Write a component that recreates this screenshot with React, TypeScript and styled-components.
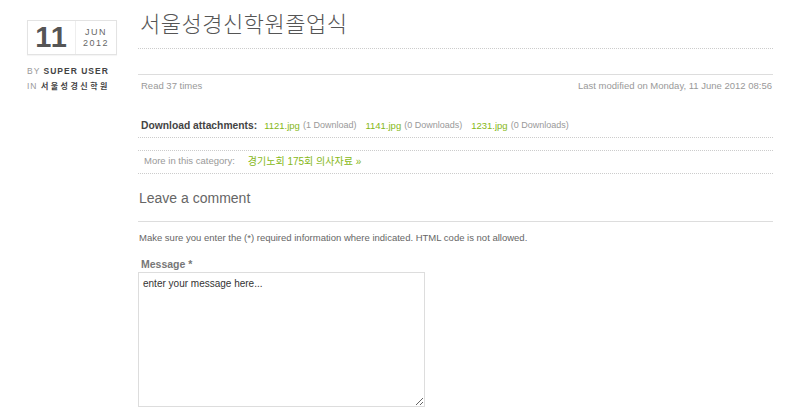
import React from 'react';
import styled, { createGlobalStyle } from 'styled-components';

const GlobalStyle = createGlobalStyle`
  html, body {
    margin: 0;
    padding: 0;
    background: #fff;
  }
  body {
    font-family: "Liberation Sans", Arial, sans-serif;
    color: #666;
  }
`;

const Page = styled.div`
  display: flex;
  align-items: flex-start;
  width: 800px;
  height: 417px;
  overflow: hidden;
`;

const Sidebar = styled.aside`
  width: 90px;
  margin: 20px 0 0 27px;
  flex-shrink: 0;
`;

const DateBox = styled.div`
  display: flex;
  align-items: center;
  height: 35px;
  border: 1px solid #e3e3e3;
  box-shadow: 0 1px 1px rgba(0, 0, 0, 0.04);
  box-sizing: border-box;
`;

const Day = styled.div`
  width: 47px;
  text-align: center;
  font-size: 29px;
  font-weight: bold;
  color: #555;
  line-height: 1;
  letter-spacing: 1px;
  border-right: 1px solid #eee;
  padding: 2px 0;
`;

const MonthYear = styled.div`
  flex: 1;
  text-align: center;
  font-size: 9px;
  letter-spacing: 1.5px;
  line-height: 11px;
  color: #666;
`;

const Meta = styled.div<{ $top: number }>`
  margin-top: ${p => p.$top}px;
  font-size: 8.5px;
  letter-spacing: 1px;
  color: #999;
  line-height: 10px;
  white-space: nowrap;

  strong {
    color: #444;
    font-weight: bold;
  }
`;

const Category = styled.strong`
  font-family: "Noto Sans CJK KR", sans-serif;
  font-size: 8px;
  letter-spacing: 2.5px;
`;

const Main = styled.main`
  width: 635px;
  margin-left: 21px;
  flex-shrink: 0;
`;

const Title = styled.h1`
  margin: 0;
  padding: 10px 0 13px 2px;
  height: 25px;
  font-family: "Noto Sans CJK KR", sans-serif;
  font-weight: 300;
  font-size: 22px;
  line-height: 25px;
  color: #555;
  letter-spacing: 0.5px;
  border-bottom: 1px dotted #ccc;
`;

const InfoRow = styled.div`
  display: flex;
  justify-content: space-between;
  margin-top: 25px;
  padding: 5px 1px 0 3px;
  border-top: 1px solid #ddd;
  font-size: 9.5px;
  line-height: 11px;
  color: #999;
`;

const Line = styled.div<{ $top: number; $height: number; $indent: number }>`
  display: flex;
  align-items: center;
  margin-top: ${p => p.$top}px;
  height: ${p => p.$height}px;
  padding-left: ${p => p.$indent}px;
  border-bottom: 1px dotted #ccc;
  font-size: 9.5px;
  color: #999;
  white-space: nowrap;
`;

const CategoryLine = styled(Line)`
  border-top: 1px dotted #ccc;
  padding-bottom: 3px;
`;

const Label = styled.span`
  font-size: 10.3px;
  font-weight: bold;
  color: #444;
  margin-right: 7px;
`;

const FileLink = styled.a`
  color: #86b817;
  text-decoration: none;
  font-size: 9.5px;
`;

const Count = styled.span`
  font-size: 9px;
  color: #999;
  margin: 0 9px 0 3px;
`;

const CatLink = styled.a`
  color: #86b817;
  text-decoration: none;
  font-family: "Liberation Sans", "Noto Sans CJK KR", sans-serif;
  font-size: 10px;
  margin-left: 13px;
`;

const CommentHeading = styled.h3`
  margin: 14px 0 0;
  padding: 0 0 13px 1px;
  font-size: 14px;
  font-weight: normal;
  line-height: 20px;
  color: #666;
  border-bottom: 1px solid #ddd;
`;

const Note = styled.p`
  margin: 10px 0 0;
  padding-left: 1px;
  font-size: 9.5px;
  line-height: 11px;
  color: #666;
`;

const FieldLabel = styled.label`
  display: block;
  margin: 15px 0 0 3px;
  font-size: 10.5px;
  font-weight: bold;
  line-height: 12px;
  color: #777;
`;

const TextArea = styled.textarea`
  display: block;
  box-sizing: border-box;
  width: 287px;
  height: 135px;
  margin-top: 2px;
  padding: 5px 4px;
  border: 1px solid #ddd;
  font-family: "Liberation Sans", Arial, sans-serif;
  font-size: 10px;
  color: #333;
  resize: both;
  outline: none;
`;

const files = [
  { name: '1121.jpg', count: '(1 Download)' },
  { name: '1141.jpg', count: '(0 Downloads)' },
  { name: '1231.jpg', count: '(0 Downloads)' },
];

export default function App() {
  return (
    <>
      <GlobalStyle />
      <Page>
        <Sidebar>
          <DateBox>
            <Day>11</Day>
            <MonthYear>
              JUN
              <br />
              2012
            </MonthYear>
          </DateBox>
          <Meta $top={11}>
            BY <strong>SUPER USER</strong>
          </Meta>
          <Meta $top={5}>
            IN <Category>서울성경신학원</Category>
          </Meta>
        </Sidebar>
        <Main>
          <Title>서울성경신학원졸업식</Title>
          <InfoRow>
            <span>Read 37 times</span>
            <span>Last modified on Monday, 11 June 2012 08:56</span>
          </InfoRow>
          <Line $top={22} $height={24} $indent={3}>
            <Label>Download attachments:</Label>
            {files.map(f => (
              <React.Fragment key={f.name}>
                <FileLink href="#">{f.name}</FileLink>
                <Count>{f.count}</Count>
              </React.Fragment>
            ))}
          </Line>
          <CategoryLine $top={12} $height={19} $indent={6}>
            More in this category:
            <CatLink href="#">경기노회 175회 의사자료 »</CatLink>
          </CategoryLine>
          <CommentHeading>Leave a comment</CommentHeading>
          <Note>Make sure you enter the (*) required information where indicated. HTML code is not allowed.</Note>
          <FieldLabel>Message *</FieldLabel>
          <TextArea defaultValue="enter your message here..." />
        </Main>
      </Page>
    </>
  );
}
